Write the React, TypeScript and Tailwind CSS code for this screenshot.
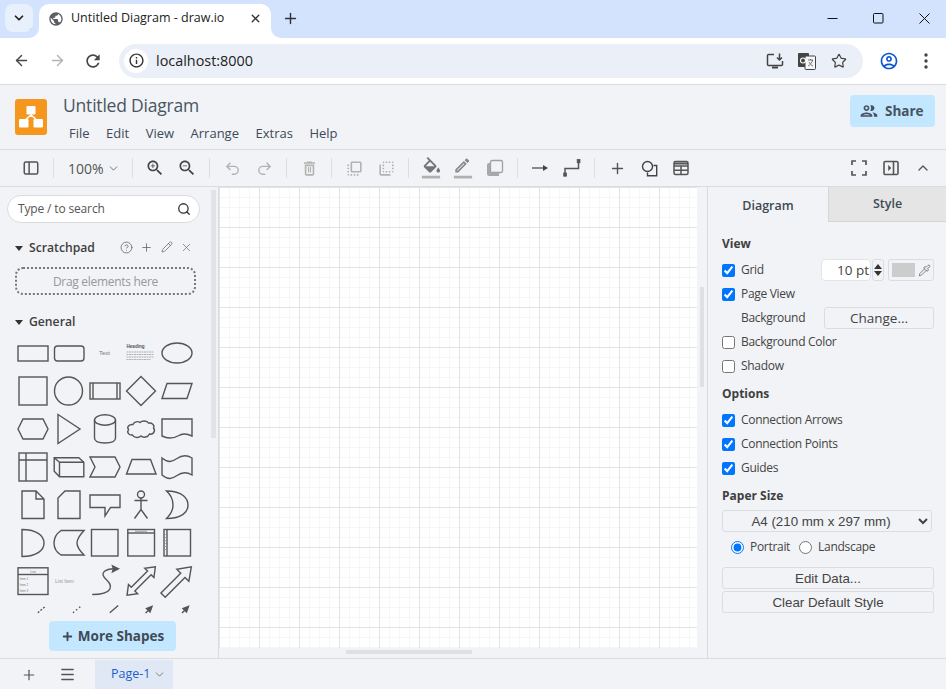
import React from "react";
import { ArrowLeft, ArrowRight, Star, Plus, X, ChevronDown, ChevronUp, Search, Pencil, CircleHelp, Pipette, Menu } from "lucide-react";

const P = ({ d, size = 20, color = "#4a4a4a", className = "" }: { d: string; size?: number; color?: string; className?: string }) => (
  <svg width={size} height={size} viewBox="0 0 24 24" fill={color} className={className}><path d={d} /></svg>
);

const S = ({ children, size = 20, color = "#555", sw = 2 }: { children: React.ReactNode; size?: number; color?: string; sw?: number }) => (
  <svg width={size} height={size} viewBox="0 0 24 24" fill="none" stroke={color} strokeWidth={sw}>{children}</svg>
);

const zoomBase = "M15.5 14h-.79l-.28-.27C15.41 12.59 16 11.11 16 9.5 16 5.91 13.09 3 9.5 3S3 5.91 3 9.5 5.91 16 9.5 16c1.61 0 3.09-.59 4.23-1.57l.27.28v.79l5 4.99L20.49 19l-4.99-5zm-6 0C7.01 14 5 11.99 5 9.5S7.01 5 9.5 5 14 7.01 14 9.5 11.99 14 9.5 14z";

const Btn = ({ children }: { children: React.ReactNode }) => (
  <div className="w-[32px] h-[32px] flex items-center justify-center shrink-0">{children}</div>
);
const Sep = () => <div className="w-px h-[20px] bg-[#dcdee2] mx-[6px] shrink-0" />;

const ss = { fill: "none", stroke: "#555", strokeWidth: 1.4 };

const Cell = ({ children, h = 38 }: { children?: React.ReactNode; h?: number }) => (
  <svg width={36} height={h} viewBox={`0 0 36 ${h}`} className="block shrink-0" {...ss}>{children}</svg>
);

const tiny = { fill: "#777", stroke: "none", fontFamily: "Liberation Sans, sans-serif" } as const;

const rows: React.ReactNode[][] = [
  [
    <rect x="3" y="12" width="30" height="15" />,
    <rect x="3.5" y="12" width="29.5" height="15" rx="3" />,
    <text x="17.5" y="21" fontSize="6" textAnchor="middle" {...tiny}>Text</text>,
    <g>
      <text x="3.5" y="14" fontSize="4.6" fontWeight="bold" {...tiny} fill="#555">Heading</text>
      <path d="M3.5 18h27M3.5 20.500h27M3.5 23h27M3.500 25.500h24" stroke="#aaa" strokeWidth=".9" strokeDasharray="2 .5" />
    </g>,
    <ellipse cx="18" cy="19" rx="15" ry="10" />,
  ],
  [
    <rect x="4" y="5" width="28" height="28" />,
    <circle cx="17.500" cy="19" r="14" />,
    <g><rect x="3" y="11" width="30" height="16" /><path d="M6 11v16M30 11v16" /></g>,
    <path d="M18 4.500 32.500 19 18 33.500 3.500 19Z" />,
    <path d="M3 26.500 8 11.500H33L28 26.500Z" />,
  ],
  [
    <path d="M3 19 8 9H28L33 19 28 29H8Z" />,
    <path d="M7 4.500 29 19 7 33.500Z" />,
    <g><path d="M7.500 10V28C7.500 31 11 33 18 33S28.500 31 28.500 28V10" /><ellipse cx="18" cy="10" rx="10.500" ry="5.300" /></g>,
    <path d="M10 14.500C11 11.500 15 11 17 12.500 19 10.500 24 10.500 25.500 13 29 12.500 32 15 30.500 18 33 21 30 25 26.500 24 25 27.500 20 28 18 26 15 28.500 10.500 27.500 9.500 25 6 25.500 3.500 22.500 5.500 19.500 3.500 17.500 6 14 10 14.500Z" />,
    <path d="M3 9H33V26C29 24 25 23 21 25 15 28.500 9 29 3 26Z" />,
  ],
  [
    <g><rect x="4" y="5" width="28" height="28" /><path d="M11 5V33M4 12H32" /></g>,
    <path d="M3.200 9.800H27.800L32.800 14.200V28.800H8.500L3.200 23.200ZM8.500 28.800V14.200H32.800M8.500 14.200 3.200 9.800" />,
    <path d="M3 9H28L33 19 28 29H3L8 19Z" />,
    <path d="M3.500 26 9 11.500H27.500L33 26Z" />,
    <path d="M3 10C9 15 13 14 18 10.500 23 7 28 7 33 10V27C28 24 23 24 18 27.500 13 31 9 32 3 27Z" />,
  ],
  [
    <path d="M7 5H21L29 13V32.500H7ZM21 5V13H29" />,
    <path d="M7 12 14 5H29V32.500H7Z" />,
    <path d="M3 9H33V21.500H23.500L18 30V21.500H3Z" />,
    <g><circle cx="18" cy="8.500" r="3.500" /><path d="M18 12V23.500M11.500 14.500H24.500M11.500 32.500 18 23.500 24.500 32.500" /></g>,
    <path d="M7.500 5C24 5 29 13 29 19 29 26 23 32.500 7.500 32.500 12 28 14 23 14 19 14 14 12 9 7.500 5Z" />,
  ],
  [
    <path d="M7 5.500C22 5.500 29 12 29 19 29 26 22 32.500 7 32.500Z" />,
    <path d="M10 6.500H33C28 12 26 15 26 19 26 23 28 26 33 31H10C5 28 3 23 3 19 3 14 5 10 10 6.500Z" />,
    <rect x="4.500" y="5.500" width="26.500" height="26.500" />,
    <g><rect x="4.800" y="5.500" width="26.700" height="26.500" /><path d="M4.800 9H31.500" /><path d="M12 7.200H24" stroke="#999" strokeWidth="1" /></g>,
    <g><rect x="5" y="5.500" width="26.500" height="26.500" /><path d="M8 5.500V32" /><path d="M6.500 10V28" stroke="#999" strokeWidth=".8" strokeDasharray="1 2" /></g>,
  ],
  [
    <g>
      <rect x="3" y="5.800" width="30" height="26.700" /><path d="M3 12.500H33" />
      <text x="18" y="10.800" fontSize="3.500" textAnchor="middle" {...tiny}>List</text>
      <text x="4.500" y="17.500" fontSize="3.200" {...tiny}>Item 1</text>
      <text x="4.500" y="23.500" fontSize="3.200" {...tiny}>Item 2</text>
      <text x="4.500" y="29.500" fontSize="3.200" {...tiny}>Item 3</text>
    </g>,
    <text x="4" y="21" fontSize="5" {...tiny} fill="#999">List Item</text>,
    <g><path d="M5.200 32.500C26.800 32.500 25.200 23.500 20.200 18.500 10.200 10.200 20.200 6.800 27 6.800" /><path d="M31.500 6.800 25.500 3.800 26.500 6.800 25.500 9.800Z" fill="#555" /></g>,
    <g transform="translate(18.200 19) rotate(-45)"><path d="M-20 0-11.500-6.500V-2.500H11.500V-6.500L20 0 11.500 6.500V2.500H-11.500V6.500Z" /></g>,
    <g transform="translate(18.200 19) rotate(-45)"><path d="M-20-3H8V-8.500L20 0 8 8.500V3H-20Z" /></g>,
  ],
];

const lastRow = [
  <path d="M22.800 12.800 30.500 6.200" strokeDasharray="2 1.500" />,
  <path d="M22 12.800 29.500 6.500" strokeDasharray="1.500 2.500" />,
  <path d="M22.800 12.800 31.200 5.500" />,
  <g><path d="M22.500 13 26 10" /><path d="M29 6.500 23.500 8.500 27 12Z" fill="#555" /></g>,
  <g><path d="M23 13 26 10" /><path d="M29.500 6.500 24 8.500 27.500 12Z" fill="#555" /></g>,
];

const Check = ({ label, checked }: { label: string; checked?: boolean }) => (
  <label className="flex items-center h-[24px] text-[12px] text-[#444] tracking-[-0.3px]">
    <input type="checkbox" defaultChecked={checked} className="w-[13px] h-[13px] m-0 shrink-0" />
    <span className="ml-[6px]">{label}</span>
  </label>
);

const Title = ({ children, className = "" }: { children: React.ReactNode; className?: string }) => (
  <div className={`text-[12px] font-bold text-[#3f3f3f] leading-[16px] ${className}`}>{children}</div>
);

const ActionBtn = ({ children, className = "" }: { children: React.ReactNode; className?: string }) => (
  <div className={`h-[22px] border border-[#dadce0] rounded-[3px] flex items-center justify-center pt-px text-[13.33px] text-[#444] font-['Liberation_Sans',sans-serif] ${className}`}>{children}</div>
);

export default function App() {
  return (
    <div className="w-[946px] h-[689px] overflow-hidden flex flex-col font-['Open_Sans',sans-serif] bg-[#f1f3f6]">
      {/* Tab strip */}
      <div className="h-[38px] bg-[#d3e3fd] flex shrink-0 relative">
        <div className="ml-[5px] mt-[4px] w-[28px] h-[28px] rounded-[8px] bg-[#e8f0fc] flex items-center justify-center">
          <ChevronDown size={14} strokeWidth={3} color="#222" />
        </div>
        <div className="ml-[6px] mt-[4px] w-[232px] h-[34px] bg-white rounded-t-[10px] flex items-center pl-[9px] pr-[10px] pb-[5px] relative">
          <P size={16} color="#5b5e63" d="M12 2C6.480 2 2 6.480 2 12s4.480 10 10 10 10-4.480 10-10S17.520 2 12 2zm-1 17.930c-3.950-.490-7-3.850-7-7.930 0-.620.080-1.210.210-1.790L9 15v1c0 1.100.900 2 2 2v1.930zm6.900-2.540c-.260-.810-1-1.390-1.900-1.390h-1v-3c0-.550-.450-1-1-1H8v-2h2c.550 0 1-.450 1-1V7h2c1.100 0 2-.900 2-2v-.410c2.930 1.190 5 4.060 5 7.410 0 2.080-.800 3.970-2.100 5.390z" />
          <span className="ml-[7px] text-[12.500px] text-[#222] whitespace-nowrap">Untitled Diagram - draw.io</span>
          <X size={13} strokeWidth={2.5} color="#333" className="ml-auto mr-[-1px]" />
          <div className="absolute left-[-10px] bottom-0 w-[10px] h-[10px] bg-white"><div className="w-full h-full bg-[#d3e3fd] rounded-br-[10px]" /></div>
          <div className="absolute right-[-10px] bottom-0 w-[10px] h-[10px] bg-white"><div className="w-full h-full bg-[#d3e3fd] rounded-bl-[10px]" /></div>
        </div>
        <div className="ml-[11px] mt-[9px] h-[18px] flex items-center"><Plus size={17} strokeWidth={2} color="#333" /></div>
        <div className="ml-auto flex items-start -mr-px">
          <div className="w-[46px] h-[36px] flex items-center justify-center"><svg width="11" height="11" viewBox="0 0 11 11"><path d="M0.500 5.500H10.500" stroke="#111" strokeWidth="1" /></svg></div>
          <div className="w-[46px] h-[36px] flex items-center justify-center"><svg width="11" height="11" viewBox="0 0 11 11"><rect x=".500" y=".500" width="9.500" height="9.500" rx="1" fill="none" stroke="#111" strokeWidth="1" /></svg></div>
          <div className="w-[46px] h-[36px] flex items-center justify-center"><svg width="11" height="11" viewBox="0 0 11 11"><path d="M.500.500 10.500 10.500M10.500.500.500 10.500" stroke="#111" strokeWidth="1" /></svg></div>
        </div>
      </div>

      {/* Browser toolbar */}
      <div className="h-[47px] bg-white border-b border-[#dadce0] flex items-center shrink-0 pb-[1px]">
        <div className="ml-[11px] w-[20px] flex justify-center"><ArrowLeft size={17} strokeWidth={2} color="#474747" /></div>
        <div className="ml-[16px] w-[20px] flex justify-center"><ArrowRight size={17} strokeWidth={2} color="#b3b3b3" /></div>
        <div className="ml-[16px] w-[20px] flex justify-center"><P size={20} color="#474747" d="M17.650 6.350C16.200 4.900 14.210 4 12 4c-4.420 0-7.990 3.580-7.990 8s3.570 8 7.990 8c3.730 0 6.840-2.550 7.730-6h-2.080c-.820 2.330-3.040 4-5.650 4-3.310 0-6-2.690-6-6s2.690-6 6-6c1.660 0 3.140.690 4.220 1.780L13 11h7V4l-2.350 2.350z" /></div>
        <div className="ml-[16px] w-[744px] h-[34px] rounded-full bg-[#ebf0f8] flex items-center pl-[5px] pr-[16px]">
          <div className="w-[24px] h-[24px] rounded-full bg-white flex items-center justify-center">
            <P size={17} color="#333" d="M11 7h2v2h-2zm0 4h2v6h-2zm1-9C6.480 2 2 6.480 2 12s4.480 10 10 10 10-4.480 10-10S17.520 2 12 2zm0 18c-4.410 0-8-3.590-8-8s3.590-8 8-8 8 3.590 8 8-3.590 8-8 8z" />
          </div>
          <span className="ml-[8px] text-[14.400px] text-[#222]">localhost:8000</span>
          <div className="ml-auto flex items-center">
            <svg width="18" height="18" viewBox="0 0 18 18" fill="none" stroke="#444" strokeWidth="1.500">
              <path d="M8 2.500H2.500A1 1 0 0 0 1.500 3.500V12.500A1 1 0 0 0 2.500 13.500H15.500A1 1 0 0 0 16.500 12.500V9" />
              <path d="M13.500 1.500V8M11 5.500 13.500 8 16 5.500" />
              <path d="M6 15.500H12" strokeWidth="2" />
            </svg>
            <svg width="20" height="20" viewBox="0 0 20 20" className="ml-[13px]">
              <rect x="1" y="2" width="11" height="14" rx="1" fill="#444" />
              <rect x="8" y="5" width="10.500" height="13.500" rx="1" fill="#f4f6fa" stroke="#444" strokeWidth="1" />
              <circle cx="6" cy="9.500" r="2.500" fill="none" stroke="#fff" strokeWidth="1.100" />
              <path d="M11 9H16M13.500 8V9M15.500 9C15 12 13 14 11 15M12 11C13 13 14.500 14.500 16 15" fill="none" stroke="#555" strokeWidth=".8" />
            </svg>
            <Star size={16} strokeWidth={1.800} color="#444" className="ml-[14px]" />
          </div>
        </div>
        <div className="ml-[16px]"><P size={20} color="#0b57d0" d="M12 2C6.480 2 2 6.480 2 12s4.480 10 10 10 10-4.480 10-10S17.520 2 12 2zM7.350 18.500C8.660 17.560 10.260 17 12 17s3.340.560 4.650 1.500C15.340 19.440 13.740 20 12 20s-3.340-.560-4.650-1.500zm10.790-1.380C16.450 15.800 14.320 15 12 15s-4.450.800-6.140 2.120C4.700 15.730 4 13.950 4 12c0-4.420 3.580-8 8-8s8 3.580 8 8c0 1.950-.700 3.730-1.860 5.120zM12 6c-1.930 0-3.500 1.570-3.500 3.500S10.070 13 12 13s3.500-1.570 3.500-3.500S13.930 6 12 6zm0 5c-.830 0-1.500-.670-1.500-1.500S11.170 8 12 8s1.500.670 1.500 1.500S12.830 11 12 11z" /></div>
        <div className="ml-[25px]"><svg width="4" height="16" viewBox="0 0 4 16" fill="#444"><circle cx="2" cy="2" r="1.700" /><circle cx="2" cy="8" r="1.700" /><circle cx="2" cy="14" r="1.700" /></svg></div>
      </div>

      {/* App header */}
      <div className="h-[65px] border-b border-[#dadce0] flex shrink-0 pl-[15px] pr-[11px]">
        <div className="mt-[14px] w-[32px] h-[36px] rounded-[3px] bg-[#f5961f] flex items-center justify-center">
          <svg width="26" height="24" viewBox="0 0 26 24" fill="#fff">
            <rect x="8.500" y="1" width="9" height="8.500" rx="1.200" />
            <rect x="1" y="14" width="9.500" height="8.500" rx="1.200" />
            <rect x="15.500" y="14" width="9.500" height="8.500" rx="1.200" />
            <path d="M13 9V12M13 10 6 16M13 10 20 16" stroke="#fff" strokeWidth="1.600" fill="none" />
          </svg>
        </div>
        <div className="ml-[16px] flex flex-col">
          <div className="mt-[8px] text-[17.500px] leading-[24px] text-[#4a5563] tracking-[-0.2px]">Untitled Diagram</div>
          <div className="mt-[6px] ml-[6px] flex gap-[16.500px] text-[13px] leading-[20px] text-[#3e4a59]">
            {["File", "Edit", "View", "Arrange", "Extras", "Help"].map((m) => <span key={m}>{m}</span>)}
          </div>
        </div>
        <div className="ml-auto mt-[10px] w-[85px] h-[32px] rounded-[4px] bg-[#c2e7fe] flex items-center pl-[9px]">
          <P size={20} color="#46525f" d="M9 13.750c-2.340 0-7 1.170-7 3.500V19h14v-1.750c0-2.330-4.660-3.500-7-3.500zM4.340 17c.840-.580 2.870-1.250 4.660-1.250s3.820.670 4.660 1.250H4.340zM9 12c1.930 0 3.500-1.570 3.500-3.500S10.930 5 9 5 5.500 6.570 5.500 8.500 7.070 12 9 12zm0-5c.830 0 1.500.670 1.500 1.500S9.830 10 9 10s-1.500-.670-1.500-1.500S8.170 7 9 7zm7.040 6.810c1.160.840 1.960 1.960 1.960 3.440V19h4v-1.750c0-2.020-3.500-3.170-5.960-3.440zM15 12c1.930 0 3.500-1.570 3.500-3.500S16.930 5 15 5c-.540 0-1.040.130-1.500.350.630.890 1 1.980 1 3.150s-.370 2.260-1 3.150c.460.220.960.350 1.500.350z" />
          <span className="ml-[6px] text-[13.500px] font-bold text-[#46525f]">Share</span>
        </div>
      </div>

      {/* Toolbar */}
      <div className="h-[37px] border-b border-[#dadce0] flex items-center shrink-0 pl-[15px] pr-[7px]">
        <Btn><S size={18} color="#555"><rect x="3" y="4" width="18" height="16" rx="2" /><path d="M9.500 4V20" /></S></Btn>
        <Sep />
        <div className="w-[66px] h-[32px] flex items-center pl-[8px] text-[14px] text-[#555] shrink-0">100%<ChevronDown size={13} strokeWidth={1.500} color="#555" className="ml-[3px]" /></div>
        <Sep />
        <Btn><P d={zoomBase + "M12 10h-2v2H9v-2H7V9h2V7h1v2h2v1z"} color="#444" /></Btn>
        <Btn><P d={zoomBase + "M7 9h5v1H7z"} color="#444" /></Btn>
        <Sep />
        <Btn><S size={17} color="#b2b2b2"><path d="M9 14 4 9l5-5" /><path d="M4 9h10.500a5.500 5.500 0 0 1 0 11H11" /></S></Btn>
        <Btn><S size={17} color="#b2b2b2"><path d="m15 14 5-5-5-5" /><path d="M20 9H9.500a5.500 5.500 0 0 0 0 11H13" /></S></Btn>
        <Sep />
        <Btn><P size={19} color="#b2b2b2" d="M16 9v10H8V9h8m-1.500-6h-5l-1 1H5v2h14V4h-3.500l-1-1zM18 7H6v12c0 1.100.900 2 2 2h8c1.100 0 2-.900 2-2V7zM10 10h1.500v7H10zM12.500 10H14v7h-1.500z" /></Btn>
        <Sep />
        <Btn><P size={19} color="#b2b2b2" d="M3 13h2v-2H3v2zm0 4h2v-2H3v2zm2 4v-2H3c0 1.100.890 2 2 2zM3 9h2V7H3v2zm12 12h2v-2h-2v2zm4-18H9c-1.110 0-2 .900-2 2v10c0 1.100.890 2 2 2h10c1.100 0 2-.900 2-2V5c0-1.100-.900-2-2-2zm0 12H9V5h10v10zm-8 6h2v-2h-2v2zm-4 0h2v-2H7v2z" /></Btn>
        <Btn><P size={19} color="#b2b2b2" d="M9 7H7v2h2V7zm0 4H7v2h2v-2zm0-8c-1.110 0-2 .900-2 2h2V3zm4 12h-2v2h2v-2zm6-12v2h2c0-1.100-.900-2-2-2zm-6 0h-2v2h2V3zM9 17v-2H7c0 1.100.890 2 2 2zm10-4h2v-2h-2v2zm0-4h2V7h-2v2zm0 8c1.100 0 2-.900 2-2h-2v2zM5 7H3v12c0 1.100.890 2 2 2h12v-2H5V7zm10-2h2V3h-2v2zm0 12h2v-2h-2v2z" /></Btn>
        <Sep />
        <Btn>
          <svg width="20" height="22" viewBox="0 0 22 24" fill="#757575"><path d="M16.560 8.940 7.620 0 6.210 1.410l2.380 2.380-5.150 5.150c-.590.590-.590 1.540 0 2.120l5.500 5.500c.290.290.680.440 1.060.440s.770-.150 1.060-.440l5.500-5.500c.590-.580.590-1.530 0-2.120zM5.210 10 10 5.210 14.790 10H5.210zM19 11.500s-2 2.170-2 3.500c0 1.100.900 2 2 2s2-.900 2-2c0-1.330-2-3.500-2-3.500z" /><rect x="1" y="20.500" width="20" height="3" fill="#b0b0b0" /></svg>
        </Btn>
        <Btn>
          <svg width="20" height="22" viewBox="0 0 22 24"><g transform="translate(0 -1) scale(.85)" fill="#858585"><path d="M14.060 9.020l.92.92L5.920 19H5v-.92l9.06-9.06M17.660 3c-.25 0-.51.100-.70.290l-1.830 1.830 3.750 3.750 1.830-1.830c.390-.390.390-1.020 0-1.410l-2.340-2.340c-.200-.200-.450-.290-.710-.290zm-3.600 3.190L3 17.250V21h3.750L17.810 9.940l-3.750-3.750z" /></g><rect x="1" y="20.500" width="20" height="3" fill="#b0b0b0" /></svg>
        </Btn>
        <Btn>
          <svg width="18" height="18" viewBox="0 0 18 18"><rect x="4.500" y="1.500" width="12" height="12" rx="1.500" fill="#f1f3f6" stroke="#a0a0a0" strokeWidth="1.300" /><path d="M4.500 4V13.500H13V17H3A2 2 0 0 1 1 15V6A2 2 0 0 1 3 4Z" fill="#a8a8a8" /></svg>
        </Btn>
        <Sep />
        <Btn><svg width="18" height="10" viewBox="0 0 18 10" fill="#444"><path d="M1 4.400H13V5.600H1Z" /><path d="M17 5 12 2V8Z" /></svg></Btn>
        <Btn>
          <svg width="20" height="20" viewBox="0 0 20 20" fill="none" stroke="#555" strokeWidth="1.500"><path d="M3 16V10.500H16.500V4" /><rect x="1.700" y="15" width="2.800" height="3.200" fill="#555" strokeWidth=".8" /><rect x="15.200" y="1.500" width="2.800" height="3.200" fill="#555" strokeWidth=".8" /></svg>
        </Btn>
        <Sep />
        <Btn><Plus size={17} strokeWidth={2} color="#555" /></Btn>
        <Btn><svg width="17" height="17" viewBox="0 0 17 17" fill="none" stroke="#444" strokeWidth="1.400"><circle cx="6.500" cy="6.500" r="5" /><path d="M12.500 5.500H15.700V15.700H6.500V12.500" /></svg></Btn>
        <Btn><svg width="16" height="16" viewBox="0 0 16 16" fill="none" stroke="#555" strokeWidth="1.500"><rect x="1" y="1.500" width="14" height="13" rx="1.500" /><path d="M1 6H15M1 10.200H15M8 6V14.500" /><path d="M1 3.500H15" strokeWidth="2" /></svg></Btn>
        <div className="ml-auto flex">
          <Btn><svg width="16" height="16" viewBox="0 0 16 16" fill="none" stroke="#555" strokeWidth="1.700"><path d="M1 5V1H5M11 1H15V5M15 11V15H11M5 15H1V11" /></svg></Btn>
          <Btn><svg width="16" height="16" viewBox="0 0 16 16" fill="none" stroke="#555" strokeWidth="1.600"><rect x="1" y="1.500" width="14" height="13" rx="1.300" /><path d="M10.500 1.500V14.500" /><path d="M5.500 5.500 8 8 5.500 10.500Z" fill="#555" strokeWidth=".6" /></svg></Btn>
          <Btn><ChevronUp size={16} strokeWidth={2} color="#555" /></Btn>
        </div>
      </div>

      {/* Main */}
      <div className="flex-1 flex min-h-0 relative">
        {/* Sidebar */}
        <div className="w-[219px] shrink-0 border-r border-[#dadce0] relative overflow-hidden flex flex-col">
          <div className="ml-[7px] mt-[8px] w-[193px] h-[28px] rounded-full bg-white border border-[#dadce0] flex items-center pl-[10px] pr-[8px] shrink-0">
            <span className="text-[12px] text-[#555] tracking-[-0.15px]">Type / to search</span>
            <Search size={14} strokeWidth={2.200} color="#333" className="ml-auto" />
          </div>
          <div className="flex items-center h-[20px] mt-[15px] ml-[15px] shrink-0">
            <svg width="8" height="5" viewBox="0 0 8 5" fill="#333"><path d="M0 0H8L4 5Z" /></svg>
            <span className="ml-[6px] text-[12.200px] font-semibold text-[#3f3f3f]">Scratchpad</span>
            <CircleHelp size={13} strokeWidth={1.500} color="#666" className="ml-[25px] -mt-[2px]" />
            <Plus size={13} strokeWidth={1.500} color="#666" className="ml-[7px] -mt-[2px]" />
            <Pencil size={12} strokeWidth={1.500} color="#666" className="ml-[8px] -mt-[2px]" />
            <X size={13} strokeWidth={1.300} color="#666" className="ml-[7px] -mt-[2px]" />
          </div>
          <div className="ml-[15px] mt-[9px] w-[181px] h-[28px] rounded-[8px] border-2 border-dotted border-[#777] flex items-center justify-center pt-px text-[12px] text-[#999] tracking-[-0.3px] shrink-0">Drag elements here</div>
          <div className="flex items-center h-[20px] mt-[17px] ml-[15px] shrink-0">
            <svg width="8" height="5" viewBox="0 0 8 5" fill="#333"><path d="M0 0H8L4 5Z" /></svg>
            <span className="ml-[6px] text-[12.200px] font-semibold text-[#3f3f3f]">General</span>
          </div>
          <div className="ml-[15px] mt-[2px] flex flex-col shrink-0">
            {rows.map((r, i) => (
              <div key={i} className="flex">{r.map((c, j) => <Cell key={j}>{c}</Cell>)}</div>
            ))}
            <div className="flex">{lastRow.map((c, j) => <Cell key={j} h={14}>{c}</Cell>)}</div>
          </div>
          <div className="absolute right-[2px] top-[3px] w-[5px] h-[248px] bg-[#e2e3e6]" />
          <div className="absolute left-[49px] top-[434px] w-[127px] h-[30px] rounded-[4px] bg-[#c2e7fe] flex items-center justify-center text-[13.500px] font-bold text-[#3f4a55]">
            <Plus size={13} strokeWidth={3.500} color="#3f4a55" className="mr-[4px]" />More Shapes
          </div>
        </div>

        {/* Canvas area */}
        <div className="flex-1 min-w-0 flex flex-col relative">
          <div className="flex-1 flex min-h-0">
            <div className="flex-1 bg-white [background-image:linear-gradient(#e3e3e3_1px,transparent_1px),linear-gradient(90deg,#e3e3e3_1px,transparent_1px),linear-gradient(#f6f6f6_1px,transparent_1px),linear-gradient(90deg,#f6f6f6_1px,transparent_1px)] [background-size:40px_40px,40px_40px,10px_10px,10px_10px]" />
            <div className="w-[10px] shrink-0" />
          </div>
          <div className="h-[10px] shrink-0" />
          <div className="absolute left-[127px] bottom-[4px] w-[126px] h-[4px] bg-[#dfe0e3]" />
          <div className="absolute right-[3px] top-[100px] w-[4px] h-[100px] bg-[#dfe0e3]" />
        </div>

        {/* Format panel */}
        <div className="w-[239px] shrink-0 border-l border-[#dadce0] flex flex-col">
          <div className="flex h-[35px] shrink-0">
            <div className="w-[120px] flex items-center justify-center pt-[3px] text-[12.500px] font-semibold text-[#3f4a55]">Diagram</div>
            <div className="flex-1 bg-[#e5e5e5] border-l border-b border-[#d5d5d5] flex items-center justify-center pt-px text-[12.500px] font-semibold text-[#3f4a55]">Style</div>
          </div>
          <div className="pl-[14px] pr-[12px] pt-[14px] flex flex-col">
            <Title>View</Title>
            <div className="flex items-center mt-[6px] h-[24px]">
              <Check label="Grid" checked />
              <div className="ml-auto flex items-center">
                <div className="w-[50px] h-[22px] bg-white border border-[#e2e4e8] rounded-[4px] flex items-center justify-end pr-[1px] text-[13.500px] text-[#444]">10 pt</div>
                <div className="ml-px w-[12px] h-[22px] border border-[#dadce0] rounded-[3px] flex flex-col items-center justify-center gap-[2px]">
                  <svg width="8" height="5" viewBox="0 0 8 5" fill="#333"><path d="M0 5H8L4 0Z" /></svg>
                  <svg width="8" height="5" viewBox="0 0 8 5" fill="#333"><path d="M0 0H8L4 5Z" /></svg>
                </div>
                <div className="ml-[4px] w-[46px] h-[22px] border border-[#dadce0] rounded-[3px] flex items-center pl-[3px]">
                  <div className="w-[23px] h-[14px] bg-[#cccccc]" />
                  <Pipette size={13} strokeWidth={1.300} color="#555" className="ml-[3px]" />
                </div>
              </div>
            </div>
            <Check label="Page View" checked />
            <div className="flex items-center h-[24px]">
              <span className="ml-[19px] text-[12px] text-[#444] tracking-[-0.3px]">Background</span>
              <div className="ml-auto w-[110px] h-[22px] border border-[#dadce0] rounded-[3px] flex items-center justify-center text-[13.500px] text-[#444]">Change...</div>
            </div>
            <Check label="Background Color" />
            <Check label="Shadow" />
            <Title className="mt-[8px]">Options</Title>
            <div className="mt-[6px] flex flex-col">
              <Check label="Connection Arrows" checked />
              <Check label="Connection Points" checked />
              <Check label="Guides" checked />
            </div>
            <Title className="mt-[8px]">Paper Size</Title>
            <select className="mt-[6px] w-[210px] h-[22px] border border-[#dadce0] rounded-[3px] text-[13.33px] text-[#444] font-['Liberation_Sans',sans-serif] [text-align-last:center] bg-transparent">
              <option>A4 (210 mm x 297 mm)</option>
            </select>
            <div className="flex items-center h-[24px] mt-[3px] text-[12px] text-[#444] tracking-[-0.3px]">
              <input type="radio" name="o" defaultChecked className="ml-[9px] m-0 w-[13px] h-[13px]" />
              <span className="ml-[6px]">Portrait</span>
              <input type="radio" name="o" className="ml-[9px] m-0 w-[13px] h-[13px]" />
              <span className="ml-[6px]">Landscape</span>
            </div>
            <ActionBtn className="mt-[8px]">Edit Data...</ActionBtn>
            <ActionBtn className="mt-[2px]">Clear Default Style</ActionBtn>
          </div>
        </div>
      </div>

      {/* Footer */}
      <div className="h-[31px] border-t border-[#dadce0] flex items-center shrink-0 pt-px">
        <div className="ml-[21px]"><Plus size={16} strokeWidth={1.800} color="#555" /></div>
        <div className="ml-[22px]"><Menu size={17} strokeWidth={2} color="#555" /></div>
        <div className="ml-[19px] w-[78px] h-full bg-[#e1e8f5] flex items-center pl-[16px] text-[12.500px] text-[#1a5fc8]">
          Page-1<ChevronDown size={13} strokeWidth={1.500} color="#666" className="ml-[3px]" />
        </div>
      </div>
    </div>
  );
}
